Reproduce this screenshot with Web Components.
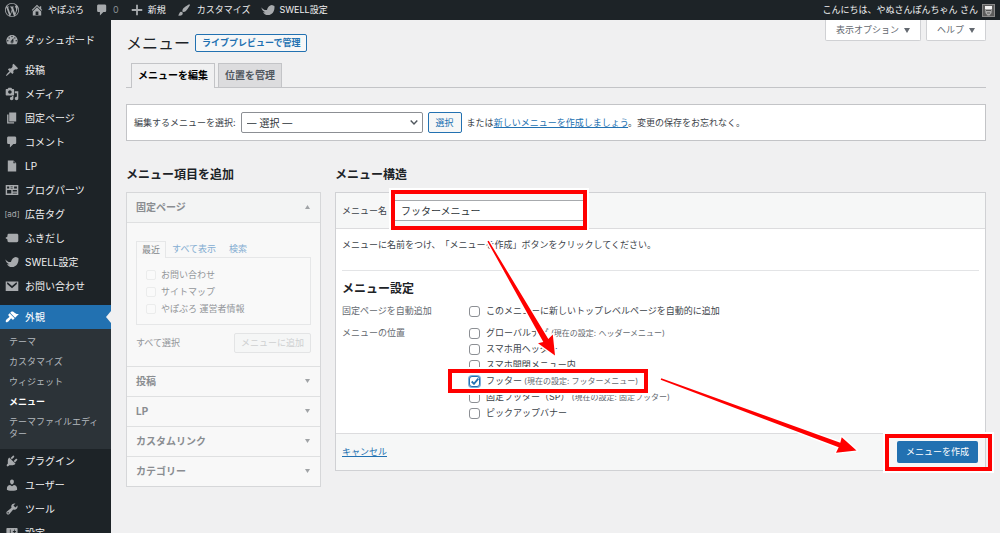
<!DOCTYPE html>
<html lang="ja">
<head>
<meta charset="utf-8">
<title>メニュー</title>
<style>
html,body{margin:0;padding:0}
body{background:#f0f0f1;color:#3c434a;font:9px/16px Inter,"Noto Sans CJK JP",sans-serif;text-spacing-trim:space-all}
</style>
</head>
<body>
<wp-admin></wp-admin>
<script>
const BASE = `*{box-sizing:border-box}
a{color:#2271b1}
h1,h2,h3,p,ul{margin:0;padding:0}
ul{list-style:none}
button,input,select{font:inherit;margin:0}
`;
function define(tag, css, html) {
  const t = document.createElement('template');
  t.innerHTML = `<style>${BASE}${css}</style>${html}`;
  customElements.define(tag, class extends HTMLElement {
    constructor() {
      super();
      this.attachShadow({ mode: 'open' }).append(t.content.cloneNode(true));
    }
  });
}

const ICONS = {
  wordpress: '<path d="M20 10c0-5.51-4.49-10-10-10C4.48 0 0 4.49 0 10c0 5.52 4.48 10 10 10 5.51 0 10-4.48 10-10zM7.78 15.37L4.37 6.22c.55-.02 1.17-.08 1.17-.08.5-.06.44-1.13-.06-1.11 0 0-1.45.11-2.37.11-.18 0-.37 0-.58-.01C4.12 2.69 6.87 1.11 10 1.11c2.33 0 4.45.87 6.05 2.34-.68-.11-1.65.39-1.65 1.58 0 .74.45 1.36.9 2.1.35.61.55 1.36.55 2.46 0 1.49-1.4 5-1.4 5l-3.03-8.37c.54-.02.82-.17.82-.17.5-.05.44-1.25-.06-1.22 0 0-1.44.12-2.38.12-.87 0-2.33-.12-2.33-.12-.5-.03-.56 1.2-.06 1.22l.92.08 1.26 3.41zM17.41 10c.24-.64.74-1.87.43-4.25.7 1.29 1.05 2.71 1.05 4.25 0 3.29-1.73 6.24-4.4 7.78.97-2.59 1.94-5.2 2.92-7.78zM6.1 18.09C3.12 16.65 1.11 13.53 1.11 10c0-1.3.23-2.48.72-3.59C3.25 10.3 4.67 14.2 6.1 18.09zm4.03-6.63l2.58 6.98c-.86.29-1.76.45-2.71.45-.79 0-1.57-.11-2.29-.33.81-2.38 1.62-4.74 2.42-7.1z"/>',
  home: '<path d="M16 8.5l1.53 1.53-1.06 1.06L10 4.6l-6.47 6.49-1.06-1.06L10 2.5l4 4v-2h2v4zm-6-2.46l6 5.99V18H4v-5.97zM12 17v-5H8v5h4z"/>',
  comment: '<path d="M5 2h9c1.1 0 2 .9 2 2v7c0 1.1-.9 2-2 2h-2l-5 5v-5H5c-1.1 0-2-.9-2-2V4c0-1.1.9-2 2-2z"/>',
  plus: '<path d="M17.500 8.700v2.600h-6.200v6.200H8.700v-6.200H2.500V8.700h6.200V2.500h2.600v6.200z"/>',
  brush: '<path d="M18.33 3.57s.27-.8-.31-1.36c-.53-.52-1.22-.24-1.22-.24-.61.3-5.76 3.47-7.67 5.57-.86.96-2.06 3.79-1.09 4.82.92.98 3.96-.17 4.79-1 2.06-2.06 5.21-7.17 5.5-7.79zM1.4 17.65c2.37-1.56 1.46-3.41 3.23-4.64.93-.65 2.22-.62 3.08.29.63.67.8 2.57-.16 3.46-1.57 1.45-4 1.55-6.15.89z"/>',
  swell: '<path d="M.5 6c2 3 4.500 4.500 8 4C9.500 6 12 3.200 15.500 2.800l3.700 1.500c.8 7-3 13-9.200 13-3.500 0-6.200-2-7-4.600 1 .6 2.200.8 3.300.6C3.300 12 1 9.500.5 6z"/>',
  dashboard: '<path fill-rule="evenodd" d="M3.76 16h12.48c1.1-1.37 1.76-3.11 1.76-5 0-4.42-3.58-8-8-8s-8 3.58-8 8c0 1.89.66 3.63 1.76 5zM10 4c.55 0 1 .45 1 1s-.45 1-1 1-1-.45-1-1 .45-1 1-1zM6 6c.55 0 1 .45 1 1s-.45 1-1 1-1-.45-1-1 .45-1 1-1zm8 0c.55 0 1 .45 1 1s-.45 1-1 1-1-.45-1-1 .45-1 1-1zm-5.37 5.55L12 7v6c0 1.1-.9 2-2 2s-2-.9-2-2c0-.57.24-1.08.63-1.45zM4 10c.55 0 1 .45 1 1s-.45 1-1 1-1-.45-1-1 .45-1 1-1zm12 0c.55 0 1 .45 1 1s-.45 1-1 1-1-.45-1-1 .45-1 1-1zm-5 3c0-.55-.45-1-1-1s-1 .45-1 1 .45 1 1 1 1-.45 1-1z"/>',
  pin: '<path d="M10.44 3.02l1.82-1.82 6.36 6.35-1.83 1.82c-1.05-.68-2.48-.57-3.41.36l-.75.75c-.92.93-1.04 2.35-.35 3.41l-1.83 1.82-2.41-2.41-2.8 2.79c-.42.42-3.38 2.71-3.8 2.29s1.86-3.39 2.28-3.81l2.79-2.79L4.1 9.36l1.83-1.82c1.05.69 2.48.57 3.4-.36l.75-.75c.93-.92 1.05-2.35.36-3.41z"/>',
  media: '<path d="M13 11V4c0-.55-.45-1-1-1h-1.670L9 1H5L3.670 3H2c-.55 0-1 .45-1 1v7c0 .55.45 1 1 1h10c.55 0 1-.45 1-1zM7 4.500c1.380 0 2.500 1.120 2.500 2.500S8.380 9.500 7 9.500 4.500 8.380 4.500 7 5.620 4.500 7 4.500zM14 6h5v10.500c0 1.380-1.120 2.500-2.500 2.500S14 17.880 14 16.500s1.120-2.500 2.500-2.500c.17 0 .34.02.5.05V9h-3V6zm-4 8.050V13h2v3.500c0 1.380-1.120 2.500-2.500 2.500S7 17.880 7 16.500 8.120 14 9.500 14c.17 0 .34.02.5.05z" fill-rule="evenodd"/>',
  page: '<path d="M6 15V2h10v13H6zm-1 1h8v2H3V5h2v11z"/>',
  file: '<path d="M12 2l4 4v12H4V2h8zm0 4h3l-3-3v3z"/>',
  parts: '<path fill-rule="evenodd" d="M1 3h18v14H1zM3 5v3h3V5zm5 0v1h3V5zm5 0v3h4V5zM8 7v1h3V7zM3 10v5h6v-5zm8 0v2h6v-2zm0 4v1h6v-1z"/>',
  balloon: '<path d="M5.500 4H17c1.100 0 2 .9 2 2v8c0 1.100-.9 2-2 2H5.500c-1.100 0-2-.9-2-2v-2L.5 10l3-2V6c0-1.100.9-2 2-2z"/>',
  mail: '<path fill-rule="evenodd" d="M1 3.500h18v13.500H1zM3 5v2.200l7 6 7-6V5h-1.200L10 10 4.200 5z"/>',
  appearance: '<path d="M14.48 11.06L7.41 3.99l1.5-1.5c.5-.56 2.3-.47 3.51.32 1.21.8 1.43 1.28 2.91 2.1 1.18.64 2.45 1.26 4.45.85zm-.71.71L6.7 4.7 4.93 6.47c-.39.39-.39 1.02 0 1.41l1.06 1.06c.39.39.39 1.03 0 1.42-.6.6-1.43 1.11-2.21 1.69-.35.26-.7.53-1.01.84C1.43 14.23.4 16.08 1.4 17.07c.99 1 2.84-.03 4.18-1.36.31-.31.58-.66.85-1.02.57-.78 1.08-1.61 1.69-2.21.39-.39 1.02-.39 1.41 0l1.06 1.06c.39.39 1.02.39 1.41 0z"/>',
  plugin: '<path d="M13.11 4.36L9.87 7.6 8 5.73l3.24-3.24c.35-.34 1.05-.2 1.56.32.52.51.66 1.21.31 1.55zm-8 1.77l.91-1.12 9.01 9.01-1.19.84c-.71.71-2.63 1.16-3.82 1.16H6.14L4.9 17.26c-.59.59-1.54.59-2.12 0-.59-.58-.59-1.53 0-2.12l1.24-1.24v-3.88c0-1.13.4-3.19 1.09-3.89zm7.26 3.97l3.24-3.24c.34-.35 1.04-.21 1.55.31.52.51.66 1.21.31 1.55l-3.24 3.25z"/>',
  user: '<path d="M10 9.250c-2.270 0-2.730-3.440-2.730-3.440C7 4.020 7.820 2 9.970 2c2.160 0 2.980 2.020 2.710 3.810 0 0-.41 3.440-2.680 3.440zm0 2.570L12.720 10c2.390 0 4.520 2.330 4.520 4.530v2.490s-3.650 1.130-7.240 1.130c-3.650 0-7.240-1.130-7.240-1.130v-2.490c0-2.250 1.940-4.480 4.470-4.480z"/>',
  tools: '<path d="M16.68 9.77c-1.34 1.34-3.3 1.67-4.95.99l-5.41 6.52c-.99.99-2.59.99-3.58 0s-.99-2.59 0-3.57l6.52-5.42c-.68-1.65-.35-3.61.99-4.95 1.28-1.28 3.12-1.62 4.72-1.06l-2.89 2.89 2.82 2.82 2.86-2.87c.53 1.58.18 3.39-1.08 4.65zM3.81 16.21c.4.39 1.04.39 1.43 0 .4-.4.4-1.04 0-1.43-.39-.4-1.03-.4-1.43 0-.39.39-.39 1.03 0 1.43z"/>',
  settings: '<path fill-rule="evenodd" d="M18 16V4c0-.55-.45-1-1-1H3c-.55 0-1 .45-1 1v12c0 .55.45 1 1 1h14c.55 0 1-.45 1-1zM8 11h1c.55 0 1 .45 1 1s-.45 1-1 1H8v1.500c0 .28-.22.5-.5.5s-.5-.22-.5-.5V13H6c-.55 0-1-.45-1-1s.45-1 1-1h1V5.500c0-.28.22-.5.5-.5s.5.22.5.5V11zm5-2h-1c-.55 0-1-.45-1-1s.45-1 1-1h1V5.500c0-.28.22-.5.5-.5s.5.22.5.5V7h1c.55 0 1 .45 1 1s-.45 1-1 1h-1v5.500c0 .28-.22.5-.5.5s-.5-.22-.5-.5V9z"/>'
};
customElements.define('wp-icon', class extends HTMLElement {
  connectedCallback() {
    if (this.shadowRoot) return;
    this.attachShadow({ mode: 'open' }).innerHTML =
      `<style>:host{display:block;flex:none;width:14px;height:14px}svg{display:block;width:100%;height:100%;fill:currentColor}</style>
       <svg viewBox="0 0 20 20" aria-hidden="true">${ICONS[this.getAttribute('name')] || ''}</svg>`;
  }
});

/* Black toolbar along the top */
define('admin-bar', `
:host{display:flex;align-items:center;height:20px;padding:0 5px;background:#1d2327;color:#f0f0f1;white-space:nowrap}
nav{display:flex;align-items:center;flex:1;gap:11px}
a{display:flex;align-items:center;gap:4px;color:inherit;text-decoration:none;line-height:20px}
wp-icon{color:#a7aaad}
.count{color:#8c8f94}
.customize{gap:6px}
.avatar{width:13px;height:13px;display:block}
`, `
<nav aria-label="ツールバー">
<a href="#wp" aria-label="WordPress"><wp-icon name="wordpress"></wp-icon></a>
<a href="#home"><wp-icon name="home"></wp-icon>やぽぶろ</a>
<a href="#comments"><wp-icon name="comment"></wp-icon><span class="count">0</span></a>
<a href="#new"><wp-icon name="plus"></wp-icon>新規</a>
<a href="#customize" class="customize"><wp-icon name="brush"></wp-icon>カスタマイズ</a>
<a href="#swell"><wp-icon name="swell"></wp-icon>SWELL設定</a>
</nav>
<a href="#account">こんにちは、やぬさんぽんちゃん さん
<svg class="avatar" viewBox="0 0 13 13" aria-hidden="true"><path fill="#8a8a8a" d="M0 0h13v13H0z"/><path fill="#5c5c5c" d="M1 1h11v11H1z"/><path fill="#aaa" d="M3 4h7l-.5 5-2 2.500h-2l-2-2.500z"/><path fill="#f4f4f4" d="M3 2h7v3H3z"/><path stroke="#555" d="M4 6.500h5M5 9h3"/></svg></a>
`);

/* Sidebar entry: icon + label; "current" paints it blue with a notch */
define('menu-item', `
:host{display:block;color:#f0f0f1;font-size:10px}
a{display:flex;align-items:center;gap:6px;height:24px;padding-left:5px;color:inherit;text-decoration:none;white-space:nowrap;position:relative}
.icon{display:block;width:14px;color:#a7aaad}
:host([current]) a{background:#2271b1;color:#fff}
:host([current]) .icon{color:#fff}
:host([current]) a::after{content:"";position:absolute;right:0;top:6px;border:6px solid transparent;border-left:0;border-right:5px solid #f0f0f1}
`, `<a href="#"><span class="icon"><slot name="icon"></slot></span><slot></slot></a>`);

define('sub-item', `
:host{display:block}
a{display:block;padding:4px 9px;line-height:12px;color:#b4b9be;text-decoration:none}
:host([current]) a{color:#fff;font-weight:700}
`, `<a href="#"><slot></slot></a>`);

define('admin-menu', `
:host{display:block;background:#1d2327;padding-top:8px;overflow:hidden}
.group{margin-bottom:6px}
.group + .group{margin-bottom:7px}
.sub{background:#2c3338;padding:3px 0 5px}
.ad{font-size:8px;line-height:12px;width:14px;display:flex;justify-content:center}
`, `
<nav aria-label="メインメニュー">
<div class="group"><menu-item><wp-icon slot="icon" name="dashboard"></wp-icon>ダッシュボード</menu-item></div>
<div class="group">
<menu-item><wp-icon slot="icon" name="pin"></wp-icon>投稿</menu-item>
<menu-item><wp-icon slot="icon" name="media"></wp-icon>メディア</menu-item>
<menu-item><wp-icon slot="icon" name="page"></wp-icon>固定ページ</menu-item>
<menu-item><wp-icon slot="icon" name="comment"></wp-icon>コメント</menu-item>
<menu-item><wp-icon slot="icon" name="file"></wp-icon>LP</menu-item>
<menu-item><wp-icon slot="icon" name="parts"></wp-icon>ブログパーツ</menu-item>
<menu-item><span slot="icon" class="ad">[ad]</span>広告タグ</menu-item>
<menu-item><wp-icon slot="icon" name="balloon"></wp-icon>ふきだし</menu-item>
<menu-item><wp-icon slot="icon" name="swell"></wp-icon>SWELL設定</menu-item>
<menu-item><wp-icon slot="icon" name="mail"></wp-icon>お問い合わせ</menu-item>
</div>
<menu-item current><wp-icon slot="icon" name="appearance"></wp-icon>外観</menu-item>
<div class="sub">
<sub-item>テーマ</sub-item>
<sub-item>カスタマイズ</sub-item>
<sub-item>ウィジェット</sub-item>
<sub-item current>メニュー</sub-item>
<sub-item>テーマファイルエディター</sub-item>
</div>
<menu-item><wp-icon slot="icon" name="plugin"></wp-icon>プラグイン</menu-item>
<menu-item><wp-icon slot="icon" name="user"></wp-icon>ユーザー</menu-item>
<menu-item><wp-icon slot="icon" name="tools"></wp-icon>ツール</menu-item>
<menu-item><wp-icon slot="icon" name="settings"></wp-icon>設定</menu-item>
</nav>`);

/* Title row, screen option buttons and tabs */
define('page-header', `
:host{display:block;white-space:nowrap}
.top{display:flex;align-items:flex-start;justify-content:space-between;height:43px}
.title{display:flex;align-items:center;gap:5px;height:18px;margin-top:14px}
h1{font-size:16px;line-height:18px;font-weight:400;color:#1d2327}
.action{display:block;border:1px solid #2271b1;border-radius:2px;background:#f6f7f7;padding:0 6px;height:18px;line-height:16px;font-weight:700;text-decoration:none}
.meta{display:flex;gap:5px}
.meta button{display:flex;align-items:center;gap:5px;height:21px;padding:0 10px;border:1px solid #d0d1d4;border-top:0;border-radius:0 0 2px 2px;background:#fff;color:#646970}
.meta svg{width:6px;height:5px;fill:#646970}
.tabs{display:flex;gap:3px;padding-left:5px;border-bottom:1px solid #c3c4c7}
.tabs a{height:24px;line-height:23px;padding:0 6px;border:1px solid #c3c4c7;border-bottom:0;background:#dcdcde;color:#50575e;font-size:10px;font-weight:700;text-decoration:none}
.tabs a.on{height:25px;margin-bottom:-1px;background:#f0f0f1;color:#000}
`, `
<div class="top">
<div class="title"><h1>メニュー</h1><a class="action" href="#preview">ライブプレビューで管理</a></div>
<div class="meta">
<button type="button">表示オプション<svg viewBox="0 0 6 5" aria-hidden="true"><path d="M0 0h6L3 5z"/></svg></button>
<button type="button">ヘルプ<svg viewBox="0 0 6 5" aria-hidden="true"><path d="M0 0h6L3 5z"/></svg></button>
</div></div>
<nav class="tabs"><a class="on" href="#edit">メニューを編集</a><a href="#locations">位置を管理</a></nav>`);

define('menu-picker', `
:host{display:flex;align-items:center;gap:5px;height:37px;margin-top:16px;padding:0 7px;background:#fff;border:1px solid #c3c4c7;white-space:nowrap}
.pick{position:relative;display:block;width:182px}
select{appearance:none;display:block;width:100%;height:21px;padding:0 5px;border:1px solid #8c8f94;border-radius:2px;background:#fff;color:#2c3338;font-size:10px;line-height:18px}
.pick svg{position:absolute;right:5px;top:7px;width:8px;height:7px;fill:none;stroke:#50575e;stroke-width:1.400;pointer-events:none}
button{height:21px;padding:0 7px;border:1px solid #2271b1;border-radius:2px;background:#f6f7f7;color:#2271b1;line-height:18px}
`, `
<label for="menu">編集するメニューを選択:</label>
<span class="pick"><select id="menu"><option>— 選択 —</option></select><svg viewBox="0 0 8 7" aria-hidden="true"><path d="M0.700 1.500 4 5l3.300-3.500"/></svg></span>
<button type="button">選択</button>
<span>または<a href="#create">新しいメニューを作成しましょう</a>。変更の保存をお忘れなく。</span>`);

define('accordion-section', `
:host{display:block;border-top:1px solid #dfe0e1}
:host([open]){border-top:0}
h3{display:flex;align-items:center;justify-content:space-between;height:29px;padding:0 10px 1px 9px;font-size:10px;color:#8a8d91}
:host([open]) h3{height:30px;background:#f3f4f4;border-bottom:1px solid #dfe0e1}
svg{width:5px;height:4px;fill:#a0a3a6}
:host([open]) svg{transform:rotate(180deg)}
.body{display:none}
:host([open]) .body{display:block;padding:18px 9px 13px}
`, `<h3><slot name="title"></slot><svg viewBox="0 0 5 4" aria-hidden="true"><path d="M0 0h5L2.500 4z"/></svg></h3><div class="body"><slot></slot></div>`);

/* Disabled list of things that could be added to a menu */
define('add-items', `
:host{display:block;border:1px solid #d6d7d9;background:#f8f8f8;color:#93969a;white-space:nowrap}
.tabs{display:flex;gap:13px;align-items:center;height:16px}
.tabs a{color:#84add2;text-decoration:none}
.tabs a.on{height:17px;margin:0 -7px -1px 0;padding:0 5px;border:1px solid #e6e7e8;border-bottom:0;background:#f8f8f8;color:#85888c}
.panel{border:1px solid #e6e7e8;padding:8px 8px 7px 9px;background:#f9f9f9}
.panel label{display:flex;align-items:center;gap:5px;height:17px}
.panel input{appearance:none;width:10px;height:10px;border:1px solid #ebecec;border-radius:2px;background:#fafafa}
.foot{display:flex;justify-content:space-between;align-items:center;margin-top:8px}
.foot button{height:20px;padding:0 6px;border:1px solid #e3e4e5;border-radius:2px;background:#f5f6f6;color:#ced0d1}
`, `
<accordion-section open><span slot="title">固定ページ</span>
<div class="tabs"><a class="on" href="#recent">最近</a><a href="#all">すべて表示</a><a href="#search">検索</a></div>
<div class="panel">
<label><input type="checkbox" disabled>お問い合わせ</label>
<label><input type="checkbox" disabled>サイトマップ</label>
<label><input type="checkbox" disabled>やぽぶろ 運営者情報</label>
</div>
<div class="foot"><span>すべて選択</span><button type="button" disabled>メニューに追加</button></div>
</accordion-section>
<accordion-section><span slot="title">投稿</span></accordion-section>
<accordion-section><span slot="title">LP</span></accordion-section>
<accordion-section><span slot="title">カスタムリンク</span></accordion-section>
<accordion-section><span slot="title">カテゴリー</span></accordion-section>`);

/* Red marker frame with a white halo; --reach is its distance from the content */
define('mark-frame', `
:host{display:block;position:relative;width:max-content}
:host::after{content:"";position:absolute;inset:var(--reach,-4px);border:4px solid #f00;box-shadow:0 0 0 2px #fff;pointer-events:none;z-index:1}
`, `<slot></slot>`);

define('menu-structure', `
:host{display:block;border:1px solid #d0d1d4;background:#fff}
.name{display:flex;align-items:center;gap:7px;height:36px;padding:0 6px;background:#f6f7f7;border-bottom:1px solid #dcdcde}
.name input{display:block;width:190px;height:21px;padding:0 6px;border:1px solid #a7aaad;background:#fff;color:#2c3338;font-size:10px}
.name mark-frame{--reach:-10px -3px -9px}
.content{padding:8px 6px 12px}
hr{margin:17px 0 10px;border:0;border-top:1px solid #e3e4e6}
h3{font-size:12px;line-height:16px;color:#1d2327}
.row{display:grid;grid-template-columns:127px 1fr;margin-top:6px}
.row > span{color:#646970}
.opt{display:flex;align-items:center;gap:6px;height:16px;width:max-content}
.opt small{font-size:8px;color:#646970;margin-left:-4px}
.opt input{appearance:none;flex:none;width:11px;height:11px;border:1px solid #8c8f94;border-radius:3px;background:#fff}
.tick{position:relative;display:block;height:11px}
.opt .tick input{display:block;border-color:#2271b1;box-shadow:0 0 0 1px #7fb0dc}
.tick svg{position:absolute;left:2px;top:2px;width:8px;height:7px;fill:none;stroke:#2271b1;stroke-width:1.800}
.row mark-frame{--reach:-4px -10px -4px -21px}
footer{display:flex;align-items:center;justify-content:space-between;height:37px;padding:0 7px 0 6px;background:#f6f7f7;border-top:1px solid #dcdcde}
footer button{display:block;height:22px;padding:0 9px;border:0;border-radius:2px;background:#2271b1;color:#fff}
footer mark-frame{--reach:-7px -14px -8px -12px}
`, `
<div class="name"><label for="name">メニュー名</label><mark-frame><input id="name" type="text" value="フッターメニュー" aria-label="メニュー名"></mark-frame></div>
<div class="content">
<p>メニューに名前をつけ、「メニューを作成」ボタンをクリックしてください。</p>
<hr>
<h3>メニュー設定</h3>
<div class="row"><span>固定ページを自動追加</span><div>
<label class="opt"><input type="checkbox">このメニューに新しいトップレベルページを自動的に追加</label></div></div>
<div class="row"><span>メニューの位置</span><div>
<label class="opt"><input type="checkbox">グローバルナビ <small>(現在の設定: ヘッダーメニュー)</small></label>
<label class="opt"><input type="checkbox">スマホ用ヘッダー</label>
<label class="opt"><input type="checkbox">スマホ開閉メニュー内</label>
<mark-frame><label class="opt"><span class="tick"><input type="checkbox" checked><svg viewBox="0 0 8 7" aria-hidden="true"><path d="M.7 3.500 3 5.800 7.300.700"/></svg></span>フッター <small>(現在の設定: フッターメニュー)</small></label></mark-frame>
<label class="opt"><input type="checkbox">固定フッター（SP） <small>(現在の設定: 固定フッター)</small></label>
<label class="opt"><input type="checkbox">ピックアップバナー</label>
</div></div>
</div>
<footer><a href="#cancel">キャンセル</a><mark-frame><button type="submit">メニューを作成</button></mark-frame></footer>`);

/* Arrows drawn over the page, from one marked control to the next */
define('guide-arrows', `
:host{position:absolute;left:0;top:0;width:0;height:0;z-index:2;pointer-events:none}
svg{display:block;width:1px;height:1px;overflow:visible}
path{fill:#f00;stroke:#fff;stroke-width:3;paint-order:stroke;stroke-linejoin:round}
`, `<svg aria-hidden="true"><path d="M487.400 241.400 543.300 342 538 343.300 555 355.500 552.800 334.500 548.300 339 488.700 240.700z"/><path d="M660.700 379.700 838.700 447.300 836 452.800 856.500 450.500 841.700 437.200 840.300 442.700 661.300 378.300z"/></svg>`);

define('wp-admin', `
:host{display:grid;grid-template:20px minmax(0,1fr) / 111px minmax(0,1fr);height:100vh;position:relative;overflow:hidden}
admin-bar{grid-column:1/-1}
main{padding:0 14px 0 15px}
.columns{display:grid;grid-template-columns:195px minmax(0,1fr);column-gap:14px;align-items:start;margin-top:26px}
h2{font-size:12px;line-height:16px;margin-bottom:9px;color:#1d2327}
`, `
<admin-bar></admin-bar>
<admin-menu></admin-menu>
<main>
<page-header></page-header>
<menu-picker></menu-picker>
<div class="columns">
<section><h2>メニュー項目を追加</h2><add-items></add-items></section>
<section><h2>メニュー構造</h2><menu-structure></menu-structure></section>
</div>
</main>
<guide-arrows></guide-arrows>`);
</script>
</body>
</html>
